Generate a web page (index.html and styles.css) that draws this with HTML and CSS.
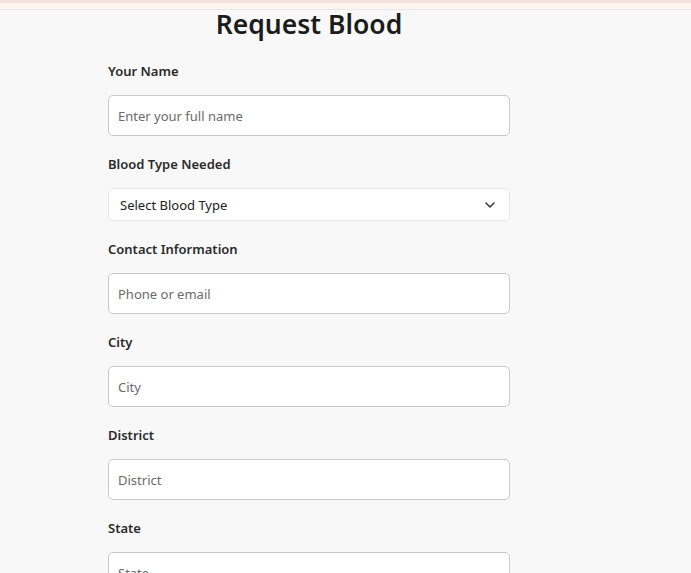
FILE: index.html
```html
<!DOCTYPE html>
<html lang="en">
<head>
<meta charset="utf-8">
<title>Request Blood</title>
<link rel="stylesheet" href="styles.css">
</head>
<body>
<header class="topbar"><div class="topbar-inner"></div></header>
<main class="page">
  <form class="request-form">
    <h1 class="title">Request Blood</h1>
    <div class="field">
      <label class="label" for="name">Your Name</label>
      <input class="input" id="name" type="text" placeholder="Enter your full name">
    </div>
    <div class="field">
      <label class="label" for="blood">Blood Type Needed</label>
      <div class="select-wrap">
        <select class="select" id="blood">
          <option>Select Blood Type</option>
          <option>A+</option><option>A-</option><option>B+</option><option>B-</option>
          <option>AB+</option><option>AB-</option><option>O+</option><option>O-</option>
        </select>
        <svg class="chevron" width="10" height="6" viewBox="0 0 10 6" aria-hidden="true"><path d="M1 1l4 4 4-4" fill="none" stroke="#333" stroke-width="1.5" stroke-linecap="round" stroke-linejoin="round"/></svg>
      </div>
    </div>
    <div class="field">
      <label class="label" for="contact">Contact Information</label>
      <input class="input" id="contact" type="text" placeholder="Phone or email">
    </div>
    <div class="field">
      <label class="label" for="city">City</label>
      <input class="input" id="city" type="text" placeholder="City">
    </div>
    <div class="field">
      <label class="label" for="district">District</label>
      <input class="input" id="district" type="text" placeholder="District">
    </div>
    <div class="field">
      <label class="label" for="state">State</label>
      <input class="input" id="state" type="text" placeholder="State">
    </div>
  </form>
</main>
</body>
</html>
```
FILE: styles.css
```css
* { box-sizing: border-box; }
html, body { margin: 0; padding: 0; }
body {
  background: #f8f8f8;
  font-family: "Noto Sans", "Open Sans", sans-serif;
  color: #222;
}
.topbar {
  height: 10px;
  background: #f1e3dc;
  border-bottom: 1px solid #e5e7eb;
  padding-top: 3px;
}
.topbar-inner {
  height: 6px;
  background: #fff5ee;
}
.page {
  padding-left: 108px;
}
.request-form {
  width: 402px;
  display: flex;
  flex-direction: column;
}
.title {
  margin: 0 0 23px;
  text-align: center;
  font-size: 26.5px;
  line-height: 28px;
  font-weight: 600;
  color: #1c1c1c;
}
.field {
  display: flex;
  flex-direction: column;
  margin-bottom: 18px;
}
.label {
  font-size: 13px;
  line-height: 21px;
  font-weight: 600;
  color: #2b2b2b;
  margin-bottom: 13px;
}
.input {
  height: 41px;
  padding: 0 9px;
  border: 1px solid #c9c9c9;
  border-radius: 5px;
  background: #fff;
  font-family: inherit;
  font-size: 13px;
  color: #222;
  outline: none;
}
.input::placeholder { color: #6b6b6b; }
.select-wrap {
  position: relative;
}
.select {
  width: 100%;
  height: 33px;
  padding: 0 11px;
  border: 1px solid #e6e6e6;
  border-radius: 5px;
  background: #fff;
  font-family: inherit;
  font-size: 13px;
  color: #222;
  appearance: none;
  -webkit-appearance: none;
  outline: none;
}
.chevron {
  position: absolute;
  right: 15px;
  top: 14px;
  pointer-events: none;
}
```
